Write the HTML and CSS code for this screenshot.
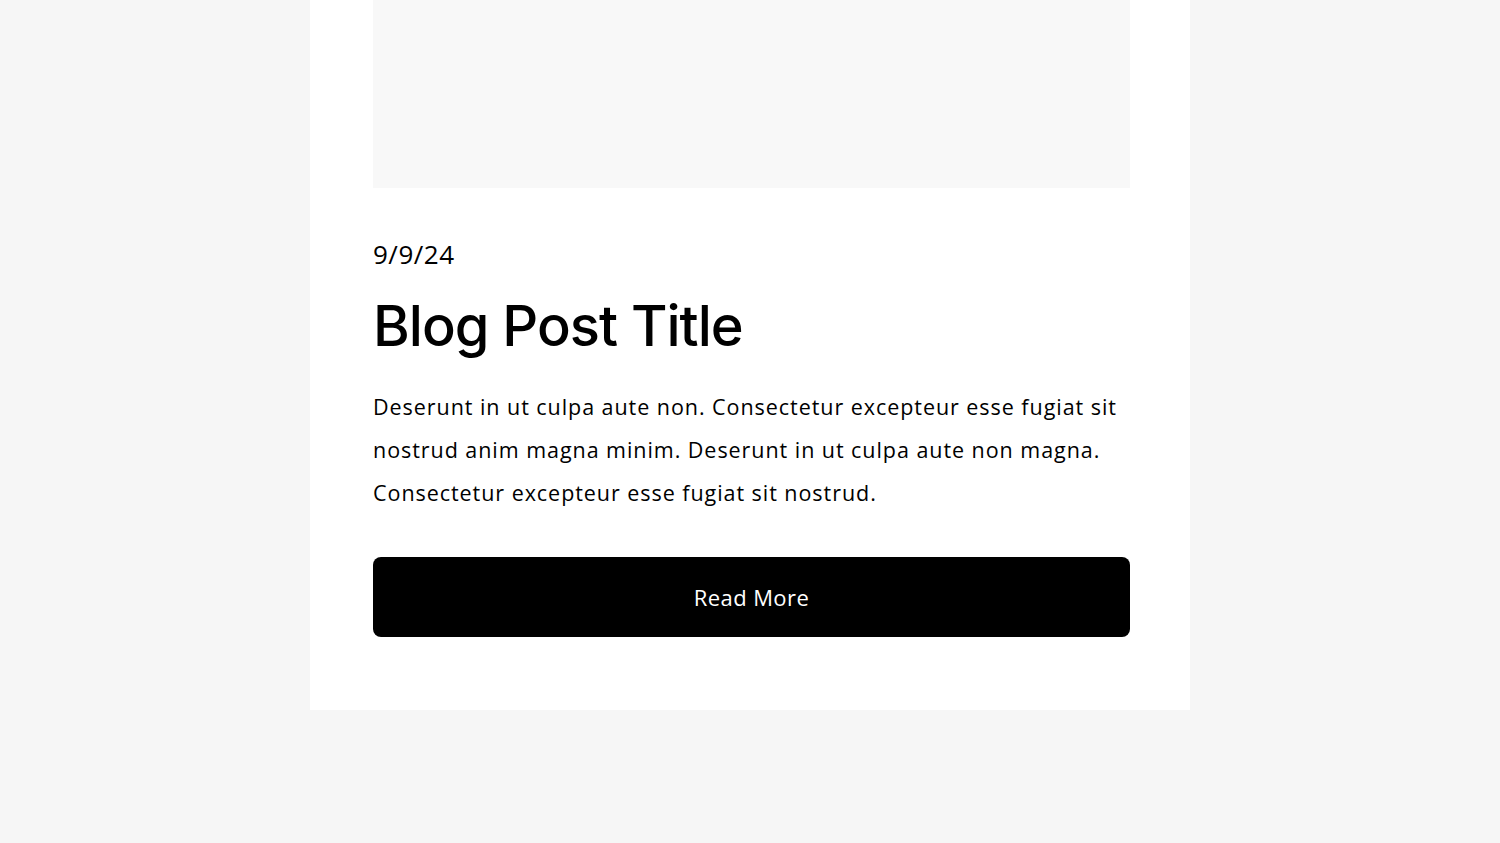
FILE: index.html
```html
<!DOCTYPE html>
<html lang="en">
<head>
  <meta charset="UTF-8">
  <meta name="viewport" content="width=device-width, initial-scale=1.0">
  <title>Blog Post</title>
  <link rel="stylesheet" href="styles.css">
</head>
<body>
  <article class="post-card">
    <!-- cover image placeholder -->
    <div class="post-cover"></div>

    <div class="post-body">
      <p class="post-date">9/9/24</p>
      <h1 class="post-title">Blog Post Title</h1>
      <p class="post-excerpt">Deserunt in ut culpa aute non. Consectetur excepteur esse fugiat sit nostrud anim magna minim. Deserunt in ut culpa aute non magna. Consectetur excepteur esse fugiat sit nostrud.</p>
      <a class="read-more" href="#">Read More</a>
    </div>
  </article>
</body>
</html>
```

FILE: styles.css
```css
body {
  margin: 0;
  padding: 0;
  background: #f6f6f6;
  font-family: "Open Sans", Arial, sans-serif;
  color: #000;
}

.post-card {
  width: 880px;
  margin: 0 auto;
  background: #fff;
  padding: 0 60px 73px 63px;
  box-sizing: border-box;
}

.post-cover {
  height: 188px;
  background: #f8f8f8;
}

.post-body {
  padding-top: 44px;
}

.post-date {
  margin: 0;
  font-size: 26px;
  line-height: 44px;
  letter-spacing: 0.5px;
}

.post-title {
  margin: 18px 0 0;
  font-family: Inter, "Noto Sans", sans-serif;
  font-weight: 500;
  font-size: 56px;
  line-height: 64px;
  letter-spacing: -1px;
}

.post-excerpt {
  margin: 27px 0 0;
  font-size: 21.5px;
  line-height: 43px;
  letter-spacing: 0.95px;
}

.read-more {
  display: block;
  margin-top: 43px;
  height: 80px;
  line-height: 80px;
  text-align: center;
  background: #000;
  color: #fff;
  border-radius: 8px;
  font-size: 22px;
  letter-spacing: 0.4px;
  text-decoration: none;
}
```
